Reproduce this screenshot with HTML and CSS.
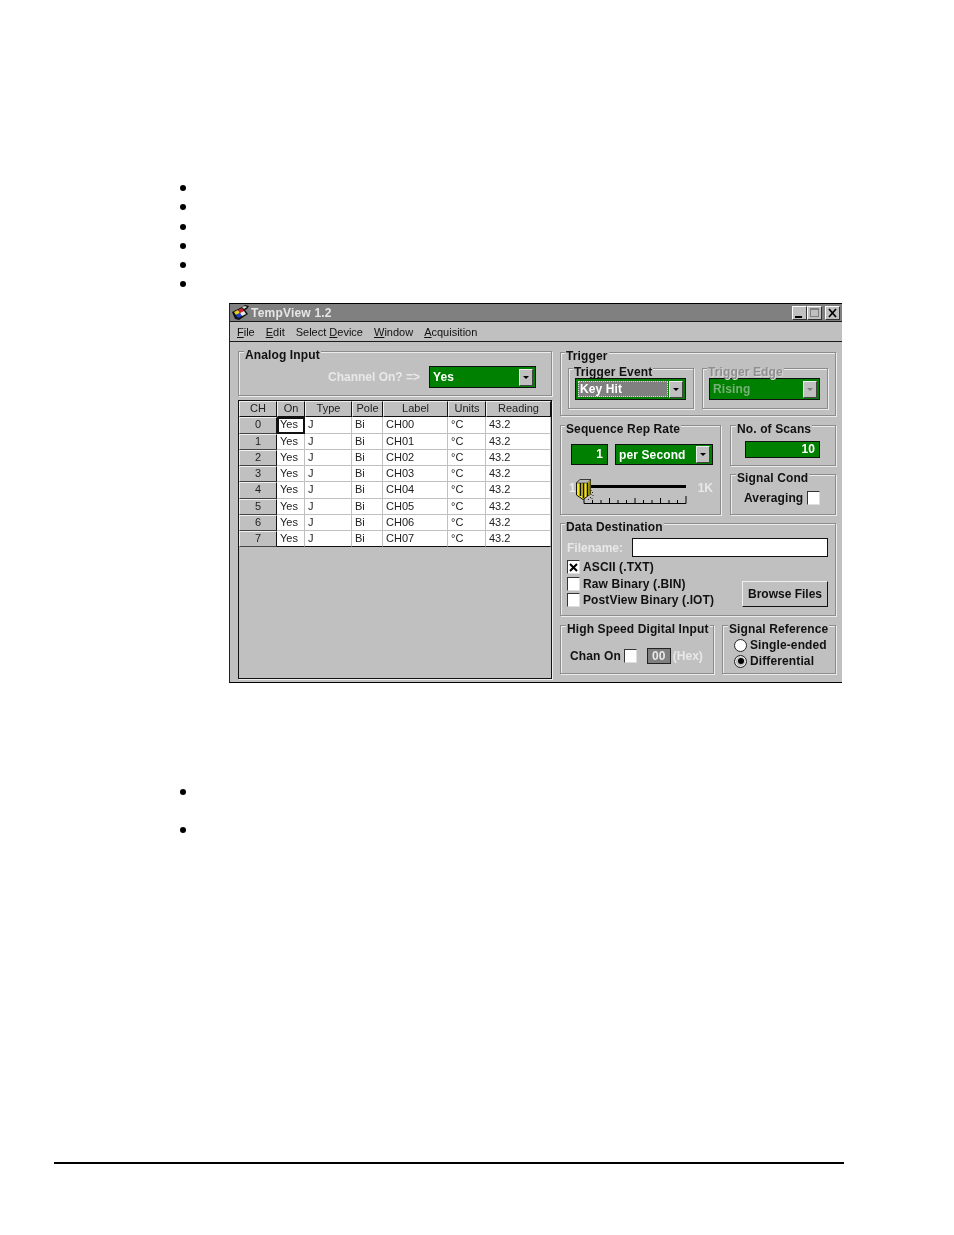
FILE: index.html
```html
<!DOCTYPE html>
<html lang="en">
<head>
<meta charset="utf-8">
<title>TempView 1.2</title>
<link rel="stylesheet" href="styles.css">
</head>
<body>
<div class="page">
  <ul class="bullets first"><li></li><li></li><li></li><li></li><li></li><li></li></ul>
  <div class="window">
    <div class="titlebar">
      <svg class="appicon" width="17" height="15" viewBox="0 0 17 15"><path d="M0 7 L10 2 L13 0 L17 1 L15 4 L13 5 L16 9 L7 15 L3 14 Z" fill="#111"/><path d="M10 2 L13 1 L15 2 L12 4 Z" fill="#d8d8d8"/><path d="M2 7 L6 5 L8 8 L4 10 Z" fill="#e8d020"/><path d="M6 5 L10 3 L12 6 L8 8 Z" fill="#d02030"/><path d="M4 10 L8 8 L10 11 L6 13 Z" fill="#2040d0"/><path d="M8 8 L12 6 L14 9 L10 11 Z" fill="#e8e8e8"/></svg>
      <span class="wintitle">TempView 1.2</span>
      <div class="winbtns">
        <span class="winbtn"><svg width="15" height="14" viewBox="0 0 15 14"><rect x="3" y="10" width="7" height="2" fill="#000"/></svg></span>
        <span class="winbtn"><svg width="15" height="14" viewBox="0 0 15 14"><rect x="3.5" y="2.5" width="8" height="8" fill="none" stroke="#808080"/><rect x="3" y="2" width="9" height="2" fill="#808080"/></svg></span>
        <span class="winbtn closebtn"><svg width="15" height="14" viewBox="0 0 15 14"><path d="M4 3 L11 11 M11 3 L4 11" stroke="#000" stroke-width="1.7"/></svg></span>
      </div>
    </div>
    <div class="menubar">
      <span><u>F</u>ile</span><span><u>E</u>dit</span><span>Select <u>D</u>evice</span><span><u>W</u>indow</span><span><u>A</u>cquisition</span>
    </div>
    <div class="client">
      <div class="leftcol">
        <div class="group analog">
          <div class="legend">Analog Input</div>
          <div class="channelrow">
            <span class="lighttext">Channel On? =&gt;</span>
            <div class="combo yescombo"><span class="combotext">Yes</span><span class="arrow"><i></i></span></div>
          </div>
        </div>
        <div class="grid">
          <div class="hd">CH</div><div class="hd">On</div><div class="hd">Type</div><div class="hd">Pole</div><div class="hd">Label</div><div class="hd">Units</div><div class="hd">Reading</div>
          <div class="rowhd">0</div><div class="cell sel">Yes</div><div class="cell">J</div><div class="cell">Bi</div><div class="cell">CH00</div><div class="cell">°C</div><div class="cell">43.2</div>
          <div class="rowhd">1</div><div class="cell">Yes</div><div class="cell">J</div><div class="cell">Bi</div><div class="cell">CH01</div><div class="cell">°C</div><div class="cell">43.2</div>
          <div class="rowhd">2</div><div class="cell">Yes</div><div class="cell">J</div><div class="cell">Bi</div><div class="cell">CH02</div><div class="cell">°C</div><div class="cell">43.2</div>
          <div class="rowhd">3</div><div class="cell">Yes</div><div class="cell">J</div><div class="cell">Bi</div><div class="cell">CH03</div><div class="cell">°C</div><div class="cell">43.2</div>
          <div class="rowhd">4</div><div class="cell">Yes</div><div class="cell">J</div><div class="cell">Bi</div><div class="cell">CH04</div><div class="cell">°C</div><div class="cell">43.2</div>
          <div class="rowhd">5</div><div class="cell">Yes</div><div class="cell">J</div><div class="cell">Bi</div><div class="cell">CH05</div><div class="cell">°C</div><div class="cell">43.2</div>
          <div class="rowhd">6</div><div class="cell">Yes</div><div class="cell">J</div><div class="cell">Bi</div><div class="cell">CH06</div><div class="cell">°C</div><div class="cell">43.2</div>
          <div class="rowhd">7</div><div class="cell">Yes</div><div class="cell">J</div><div class="cell">Bi</div><div class="cell">CH07</div><div class="cell">°C</div><div class="cell">43.2</div>
        </div>
      </div>
      <div class="rightcol">
        <div class="group trigger">
          <div class="legend">Trigger</div>
          <div class="triggerrow">
            <div class="group sub">
              <div class="legend">Trigger Event</div>
              <div class="combo"><span class="combotext focus">Key Hit</span><span class="arrow"><i></i></span></div>
            </div>
            <div class="group sub">
              <div class="legend dim">Trigger Edge</div>
              <div class="combo disabled"><span class="combotext">Rising</span><span class="arrow"><i></i></span></div>
            </div>
          </div>
        </div>
        <div class="midrow">
          <div class="group seq">
            <div class="legend">Sequence Rep Rate</div>
            <div class="seqrow">
              <div class="greenbox rate">1</div>
              <div class="combo percombo"><span class="combotext">per Second</span><span class="arrow"><i></i></span></div>
            </div>
            <div class="sliderrow">
              <span class="lighttext">1</span>
              <svg class="slider" width="122" height="26" viewBox="0 0 122 26">
                <rect x="12" y="6" width="98" height="3" fill="#000"/>
                <path d="M8 24.5 H110 V17 M8 24.5 V18 M16.5 24.5 V21 M25 24.5 V21 M33.500 24.5 V19 M42 24.5 V21 M50.500 24.5 V21 M59 24.5 V19 M67.500 24.5 V21 M76 24.5 V21 M84.500 24.5 V19 M93 24.5 V21 M101.500 24.5 V21" stroke="#000" fill="none"/>
                <path d="M14.500 11 h1 v1 h-1 Z M16 13 h1 v1 h-1 Z M14.500 15 h1 v1 h-1 Z M16.500 16 h1 v1 h-1 Z M14 18 h1 v1 h-1 Z M12 20 h1 v1 h-1 Z M15.500 19 h1 v1 h-1 Z" fill="#222"/>
                <path d="M0.500 4 L4 0.500 H14.500 V15 L7 20.500 L0.500 16 Z" fill="#f4e41c" stroke="#111"/>
                <path d="M4 0.500 H14.500 L11.500 4 H0.500 Z" fill="#b8b8b8" stroke="#111" stroke-width=".5"/>
                <path d="M4.500 4 V17 M7.500 4 V19 M11.500 4 V17" stroke="#111" stroke-width="1.6"/>
                <path d="M12.500 4 L14.500 1 V15 L12.500 17 Z" fill="#8a8410"/>
              </svg>
              <span class="lighttext">1K</span>
            </div>
          </div>
          <div class="sidecol">
            <div class="group scans">
              <div class="legend">No. of Scans</div>
              <div class="greenbox scanbox">10</div>
            </div>
            <div class="group cond">
              <div class="legend">Signal Cond</div>
              <div class="avg"><span>Averaging</span><span class="check"></span></div>
            </div>
          </div>
        </div>
        <div class="group dest">
          <div class="legend">Data Destination</div>
          <div class="filerow"><span class="lighttext">Filename:</span><span class="fileinput"></span></div>
          <div class="destbody">
            <div class="checks">
              <div class="checkrow"><span class="check"><svg width="9" height="9" viewBox="0 0 9 9"><path d="M1 1 L8 8 M8 1 L1 8" stroke="#000" stroke-width="2"/></svg></span>ASCII (.TXT)</div>
              <div class="checkrow"><span class="check"></span>Raw Binary (.BIN)</div>
              <div class="checkrow"><span class="check"></span>PostView Binary (.IOT)</div>
            </div>
            <div class="browse">Browse Files</div>
          </div>
        </div>
        <div class="botrow">
          <div class="group hispeed">
            <div class="legend">High Speed Digital Input</div>
            <div class="chanrow"><span>Chan On</span><span class="check"></span><span class="hexbox">00</span><span class="lighttext">(Hex)</span></div>
          </div>
          <div class="group sigref">
            <div class="legend">Signal Reference</div>
            <div class="radios">
              <div class="radiorow"><span class="radio"></span>Single-ended</div>
              <div class="radiorow"><span class="radio on"></span>Differential</div>
            </div>
          </div>
        </div>
      </div>
    </div>
  </div>
  <ul class="bullets second"><li></li><li></li></ul>
  <div class="rule"></div>
</div>
</body>
</html>
```
FILE: styles.css
```css
* { box-sizing: border-box; }
html, body { margin: 0; background: #fff; }
body { font-family: "Liberation Sans", Arial, sans-serif; }
.page { width: 954px; height: 1235px; padding-top: 178px; overflow: hidden; }

.bullets { list-style: none; margin: 0 0 0 180px; padding: 0; }
.bullets li { width: 6px; }
.bullets li::before { content: ""; display: block; width: 6px; height: 6px; border-radius: 50%; background: #000; }
.first { height: 125px; }
.first li { height: 19.3px; padding-top: 7px; }
.second { margin-top: 99px; }
.second li { height: 38px; padding-top: 7px; }

.window { margin-left: 229px; width: 613px; height: 380px; background: #c0c0c0; border-top: 1px solid #000; border-left: 1px solid #222; border-bottom: 1px solid #000; display: flex; flex-direction: column; color: #000; font-size: 12px; filter: blur(.3px); }
.titlebar { height: 18px; flex: none; background: #808080; display: flex; align-items: center; padding: 0 2px; border-bottom: 1px solid #1a1a1a; }
.appicon { flex: none; }
.wintitle { margin-left: 2px; color: #e6e6e6; font-weight: bold; letter-spacing: .2px; }
.winbtns { margin-left: auto; display: flex; }
.winbtn { width: 15px; height: 14px; background: #c0c0c0; border: 1px solid; border-color: #fff #333 #333 #fff; display: flex; overflow: hidden; }
.winbtn svg { flex: none; margin: -1px; }
.closebtn { margin-left: 3px; }

.menubar { height: 20px; flex: none; display: flex; align-items: center; gap: 11px; padding: 0 0 0 7px; border-bottom: 1px solid #1a1a1a; font-size: 11px; color: #111; }

.client { flex: 1; min-height: 0; display: flex; gap: 8px; padding: 9px 0 3px 8px; }
.leftcol { width: 314px; flex: none; display: flex; flex-direction: column; gap: 4px; }
.rightcol { width: 276px; flex: none; padding-top: 1px; display: flex; flex-direction: column; }

.group { border: 1px solid #8c8c8c; box-shadow: inset 1px 1px 0 #ececec, 1px 1px 0 #ececec; padding: 0 7px 0 6px; font-weight: bold; letter-spacing: .12px; color: #111; }
.legend { margin: -2px 0 0 -2px; height: 10px; line-height: 10px; width: fit-content; background: #c0c0c0; padding: 0 1px; white-space: nowrap; }
.analog > .legend, .scans > .legend, .cond > .legend, .hispeed > .legend, .sigref > .legend { margin-left: -1px; }
.trigger > .legend { margin-left: -3px; }
.hispeed > .legend, .sigref > .legend { margin-left: 0; }
.legend.dim { color: #8f8f8f; text-shadow: 1px 1px 0 #d8d8d8; }
.lighttext { color: #e8e8e8; font-weight: bold; letter-spacing: 0; white-space: nowrap; }

.analog { height: 45px; flex: none; }
.channelrow { display: flex; align-items: center; justify-content: flex-end; gap: 9px; padding-right: 8px; margin-top: 6px; }

.combo { height: 22px; background: #008000; border: 1px solid #111; display: flex; align-items: center; padding: 2px; color: #fff; font-weight: bold; flex: none; }
.combotext { flex: 1; height: 100%; line-height: 17px; padding-left: 1px; white-space: nowrap; }
.combotext.focus { background: #808080; outline: 1px dotted #ddd; outline-offset: -1px; margin-right: 1px; padding-left: 2px; }
.arrow { width: 14px; height: 17px; flex: none; background: #c0c0c0; border: 1px solid; border-color: #eee #444 #444 #eee; display: flex; align-items: center; justify-content: center; }
.arrow i { width: 0; height: 0; border: 3px solid transparent; border-top: 3px solid #000; border-bottom: 0; }
.yescombo { width: 107px; }
.disabled { color: #77b077; }
.disabled .arrow i { border-top-color: #808080; }

.grid { flex: 1; border: 1px solid #111; display: grid; grid-template-columns: 38px 28px 47px 31px 65px 38px 65px; grid-auto-rows: 16.25px; font-weight: normal; font-size: 11px; align-content: start; background: #c0c0c0; box-shadow: 1px 1px 0 #eee; }
.hd { background: #c0c0c0; border: 1px solid; border-color: #f0f0f0 #111 #111 #f0f0f0; text-align: center; line-height: 13px; color: #222; overflow: hidden; }
.rowhd { background: #c0c0c0; border: 1px solid; border-color: #f0f0f0 #111 #444 #f0f0f0; text-align: center; line-height: 12px; color: #222; overflow: hidden; }
.cell { background: #fff; border-right: 1px solid #c0c0c0; border-bottom: 1px solid #c0c0c0; line-height: 14px; padding-left: 3px; color: #222; white-space: nowrap; overflow: hidden; }
.cell.sel { border: 2px solid #111; line-height: 11px; padding-left: 1px; }
.cell:nth-last-child(-n+6) { border-bottom-color: #111; }

.trigger { height: 64px; flex: none; padding: 0 7px; }
.triggerrow { display: flex; gap: 8px; margin-top: 7px; }
.sub { width: 126px; height: 41px; padding: 0 6px; }
.sub .combo { margin-top: 1px; width: 111px; }

.midrow { display: flex; gap: 9px; margin-top: 9px; height: 90px; flex: none; }
.seq { width: 161px; flex: none; }
.seqrow { display: flex; gap: 7px; padding-left: 4px; margin-top: 10px; }
.greenbox { background: #008000; border: 1px solid #111; color: #fff; font-weight: bold; text-align: right; padding-right: 4px; }
.rate { width: 38px; height: 21px; line-height: 18px; }
.percombo { width: 98px; height: 21px; }
.sliderrow { display: flex; align-items: flex-start; margin-top: 14px; }
.sliderrow .lighttext { margin-top: 2px; }
.sliderrow .lighttext:first-child { margin-left: 2px; }
.slider { flex: none; }

.sidecol { flex: 1; display: flex; flex-direction: column; gap: 8px; }
.scans, .cond { height: 41px; flex: none; }
.scanbox { width: 75px; height: 17px; line-height: 15px; margin: 7px 0 0 8px; }
.avg { display: flex; align-items: center; gap: 4px; margin: 8px 0 0 7px; }

.check { width: 13px; height: 14px; flex: none; background: #fff; border: 1px solid; border-color: #333 #ddd #ddd #333; display: inline-flex; align-items: center; justify-content: center; }

.dest { height: 93px; flex: none; margin-top: 8px; }
.filerow { display: flex; align-items: center; justify-content: space-between; height: 19px; margin-top: 6px; }
.fileinput { width: 196px; height: 19px; background: #fff; border: 1px solid #111; }
.destbody { display: flex; justify-content: space-between; align-items: flex-end; }
.checks { display: flex; flex-direction: column; gap: 2.5px; margin-top: 3px; }
.checkrow { display: flex; align-items: center; gap: 3px; height: 14px; white-space: nowrap; }
.browse { width: 86px; height: 26px; line-height: 24px; text-align: center; letter-spacing: 0; border: 1px solid; border-color: #f0f0f0 #111 #111 #f0f0f0; }

.botrow { display: flex; gap: 8px; margin-top: 9px; height: 49px; flex: none; }
.hispeed { width: 154px; flex: none; padding: 0 5px; }
.chanrow { display: flex; align-items: center; margin: 14px 0 0 4px; }
.chanrow .check { margin-left: 3px; }
.hexbox { width: 24px; height: 16px; margin-left: 10px; margin-right: 2px; background: #808080; border: 1px solid #222; color: #e8e8e8; text-align: center; line-height: 14px; }
.sigref { width: 114px; flex: none; padding: 0 5px; }
.radios { margin-top: 3px; }
.radiorow { display: flex; align-items: center; gap: 3px; height: 16px; margin-left: 6px; white-space: nowrap; }
.radio { width: 13px; height: 13px; flex: none; border-radius: 50%; background: #fff; border: 1px solid #222; display: flex; align-items: center; justify-content: center; }
.radio.on { background: #c0c0c0; box-shadow: inset 0 0 0 1px #eee; }
.radio.on::after { content: ""; width: 6px; height: 6px; border-radius: 50%; background: #000; }

.rule { margin: 304px 0 0 54px; width: 790px; height: 2px; background: #000; }
```
